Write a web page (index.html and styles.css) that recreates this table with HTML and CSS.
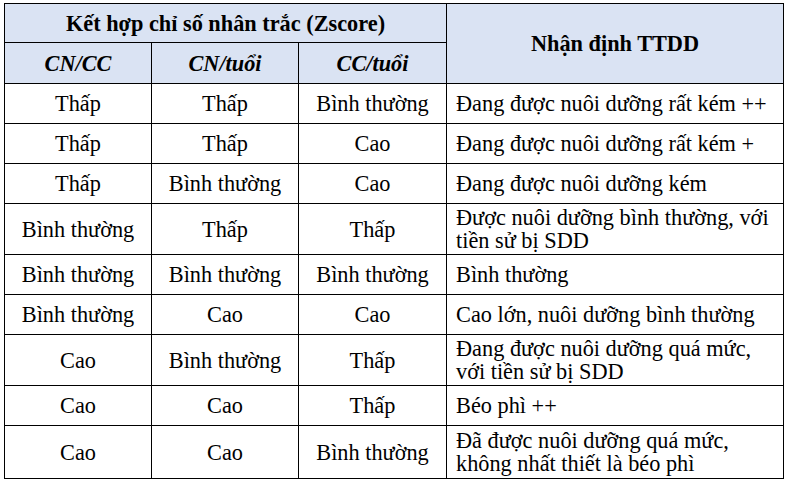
FILE: index.html
```html
<!DOCTYPE html>
<html lang="vi">
<head>
<meta charset="utf-8">
<link rel="stylesheet" href="styles.css">
</head>
<body>
<table class="tbl">
  <colgroup>
    <col class="c1"><col class="c2"><col class="c3"><col class="c4">
  </colgroup>
  <thead>
    <tr class="h1">
      <th colspan="3" class="hd">Kết hợp chỉ số nhân trắc (Zscore)</th>
      <th rowspan="2" class="hd">Nhận định TTDD</th>
    </tr>
    <tr class="h2">
      <th class="hd sub">CN/CC</th>
      <th class="hd sub">CN/tuổi</th>
      <th class="hd sub">CC/tuổi</th>
    </tr>
  </thead>
  <tbody>
    <tr class="r1"><td>Thấp</td><td>Thấp</td><td>Bình thường</td><td class="desc">Đang được nuôi dưỡng rất kém ++</td></tr>
    <tr class="r1"><td>Thấp</td><td>Thấp</td><td>Cao</td><td class="desc">Đang được nuôi dưỡng rất kém +</td></tr>
    <tr class="r1"><td>Thấp</td><td>Bình thường</td><td>Cao</td><td class="desc">Đang được nuôi dưỡng kém</td></tr>
    <tr class="r2"><td>Bình thường</td><td>Thấp</td><td>Thấp</td><td class="desc">Được nuôi dưỡng bình thường, với<br>tiền sử bị SDD</td></tr>
    <tr class="r1"><td>Bình thường</td><td>Bình thường</td><td>Bình thường</td><td class="desc">Bình thường</td></tr>
    <tr class="r1"><td>Bình thường</td><td>Cao</td><td>Cao</td><td class="desc">Cao lớn, nuôi dưỡng bình thường</td></tr>
    <tr class="r2"><td>Cao</td><td>Bình thường</td><td>Thấp</td><td class="desc">Đang được nuôi dưỡng quá mức,<br>với tiền sử bị SDD</td></tr>
    <tr class="r1"><td>Cao</td><td>Cao</td><td>Thấp</td><td class="desc">Béo phì ++</td></tr>
    <tr class="r3"><td>Cao</td><td>Cao</td><td>Bình thường</td><td class="desc">Đã được nuôi dưỡng quá mức,<br>không nhất thiết là béo phì</td></tr>
  </tbody>
</table>
</body>
</html>
```
FILE: styles.css
```css
html, body {
  margin: 0;
  background: #ffffff;
}
body {
  padding: 3px 0 0 4px;
  font-family: "Liberation Serif", "Times New Roman", serif;
  color: #000;
}
.tbl {
  border-collapse: collapse;
  table-layout: fixed;
  width: 779px;
  font-family: "Liberation Serif", "Times New Roman", serif;
  font-size: 22.3px;
  line-height: 23px;
}
.c1 { width: 147px; }
.c2 { width: 147px; }
.c3 { width: 148px; }
.c4 { width: 337px; }
.tbl th, .tbl td {
  border: 1px solid #000;
  padding: 0;
  vertical-align: middle;
  text-align: center;
  white-space: nowrap;
}
.hd {
  background: #dae3f3;
  font-weight: bold;
}
.sub {
  font-style: italic;
}
.h1 { height: 39px; }
.h2 { height: 41px; }
.r1 { height: 40px; }
.r2 { height: 51px; }
.r3 { height: 53px; }
.tbl td.desc {
  text-align: left;
  padding-left: 9px;
}
```
